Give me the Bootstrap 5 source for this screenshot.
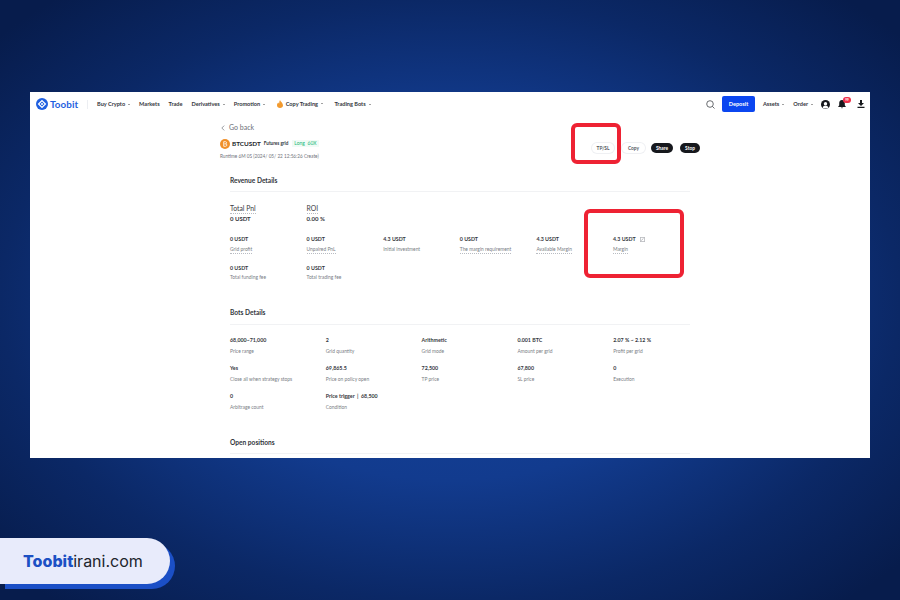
<!DOCTYPE html>
<html lang="en">
<head>
  <meta charset="UTF-8" />
  <meta name="viewport" content="width=device-width, initial-scale=1.0"/>
  <title>Toobit | Bot details</title>
  <link href="https://cdn.jsdelivr.net/npm/bootstrap@5.3.0/dist/css/bootstrap.min.css" rel="stylesheet">
  <style>
    html, body { height: 100%; }
    body {
      width: 900px;
      height: 600px;
      overflow: hidden;
      font-family: "Lato", "Liberation Sans", sans-serif;
      background: radial-gradient(ellipse 600px 400px at 450px 300px, #15459f 0%, #123b8e 45%, #0b2866 75%, #071c4c 100%);
      padding-top: 92px;
    }
    .shot {
      position: relative;
      width: 840px;
      height: 366px;
      margin-left: 30px;
      overflow: hidden;
      color: #23262b;
    }
    .topbar { height: 24px; padding: 0 5px 0 6px; font-size: 5.6px; font-weight: 700; color: #33363c; }
    .brand { color: #1f5fe0; font-size: 9.8px; font-weight: 700; width: 51px; gap: 2px; letter-spacing: .1px; }
    .brand-sep { width: 1px; height: 9px; background: #eceef2; margin: 0 9px 0 0; }
    .menu { gap: 9px; }
    .menu-item { white-space: nowrap; }
    .caret::after { content: ""; display: inline-block; margin-left: 3px; vertical-align: 1px; border: 1.5px solid transparent; border-top: 1.7px solid #444; border-bottom: 0; }
    .copy-item { margin: 0 2.500px; }
    .flame { margin-right: 3px; }
    .search-icon { margin-right: 7px; }
    .order-item { margin-left: 9px; }
    .deposit { background: #0b46f0; color: #fff; width: 33px; height: 16px; border-radius: 2px; font-size: 5.6px; font-weight: 700; padding: 0; border: 0; }
    .bell-count { position: absolute; top: -3px; left: 5px; width: 8px; height: 6px; border-radius: 3px; background: #f0304a; color: #fff; font-size: 3px; line-height: 6px; text-align: center; }
    .page { width: 480px; margin-left: 190px; }
    .back { height: 11px; margin-top: 6px; font-size: 7px; color: #6d7178; line-height: 11px; gap: 4px; padding-left: 1px; }
    .head { margin-top: 5px; height: 24px; }
    .pair { font-size: 6.400px; font-weight: 700; line-height: 11px; gap: 2px; }
    .grid-tag { font-size: 4.600px; font-weight: 700; color: #30343a; margin-left: 1px; }
    .long-tag { font-size: 5px; font-weight: 400; color: #18b979; background: #f0fbf6; padding: 0 2px; line-height: 7px; margin-left: 2px; }
    .runtime { font-size: 4.7px; color: #6f737a; margin-top: 3.500px; line-height: 7px; white-space: nowrap; }
    .pill { height: 10px; border-radius: 5px; font-size: 4.8px; line-height: 10px; padding: 0; text-align: center; font-weight: 700; }
    .pill-light { background: #fff; color: #55595f; box-shadow: 0 0 0 1px #eff0f3; }
    .pill-dark { background: #16181d; color: #fff; }
    .pills { gap: 7px; padding-top: 5px; }
    .w-tpsl { width: 22px; margin-right: 1px; }
    .w-copy { width: 23px; margin-right: -1px; }
    .w-share { width: 22px; }
    .w-stop { width: 20px; }
    .block { margin: 0 10px; }
    .block-title { font-size: 6.600px; font-weight: 700; line-height: 10px; color: #33363c; }
    .rule { height: 1px; background: #f1f2f4; margin: 6px 0 0; }
    .cell { flex: 0 0 auto; padding: 0; }
    .cell-value { font-size: 5.300px; font-weight: 700; line-height: 8px; color: #35383e; white-space: nowrap; }
    .cell-label { font-size: 4.9px; line-height: 7px; color: #797d84; margin-top: 2.500px; white-space: nowrap; }
    .dashed { display: inline-block; border-bottom: .6px dotted #b9bcc2; }
    .big-label { display: block; width: fit-content; font-size: 6.8px; line-height: 9px; color: #3a3d43; }
    .big-value { font-size: 6px; font-weight: 700; line-height: 9px; color: #35383e; }
    .rev-cols > .cell { width: 76.6px; }
    .bot-cols > .cell { width: 95.8px; }
    .rev-top { margin-top: 12px; }
    .rev-mid { margin-top: 12px; }
    .rev-low { margin-top: 10px; }
    .bots { margin-top: 26px; }
    .bots .rule { margin-top: 7px; }
    .bot-grid { margin-top: 11px; margin-right: -20px; row-gap: 9.500px; }
    .bot-grid .cell-label { margin-top: 3.500px; }
    .opens { margin-top: 26.500px; }
    .mark-box { position: absolute; border: 4px solid #ee2233; border-radius: 6px; }
    .mark-tpsl { left: 541px; top: 31px; width: 50px; height: 41px; }
    .mark-margin { left: 554px; top: 117px; width: 100px; height: 69px; }
    .site-tag {
      width: 170px;
      height: 46px;
      margin-top: 80px;
      background: #e8ebfb;
      border-radius: 0 23px 23px 0;
      box-shadow: 5px 5px 0 #1b4fc6;
      padding-left: 23px;
      font-family: "Inter", "Liberation Sans", sans-serif;
      font-size: 16px;
      line-height: 46px;
      color: #20242c;
    }
    .site-tag b { color: #1c50c4; font-weight: 800; }
  </style>
</head>
<body>
  <div class="shot bg-white">
    <nav class="topbar d-flex align-items-center">
      <div class="brand d-flex align-items-center">
        <svg width="12" height="12" viewBox="0 0 12 12"><circle cx="6" cy="6" r="6" fill="#1f5fe0"/><path d="M6 2.6 9.4 6 6 9.4 2.6 6Z" fill="none" stroke="#fff" stroke-width="1.3"/><circle cx="6" cy="6" r="1" fill="#fff"/></svg>
        <span>Toobit</span>
      </div>
      <span class="brand-sep"></span>
      <div class="menu d-flex align-items-center">
        <span class="menu-item caret">Buy Crypto</span>
        <span class="menu-item">Markets</span>
        <span class="menu-item">Trade</span>
        <span class="menu-item caret">Derivatives</span>
        <span class="menu-item caret">Promotion</span>
        <span class="menu-item caret copy-item d-flex align-items-center"><svg class="flame" width="6" height="8" viewBox="0 0 6 8"><path d="M3 0C3.3 1.6 6 3 6 5.2 6 6.900 4.700 8 3 8S0 6.900 0 5.200C0 4 .8 3.200 1.300 2.600 1.500 3.200 1.800 3.500 2.200 3.600 2.100 2.200 2.400 1 3 0Z" fill="#f29a2e"/></svg>Copy Trading</span>
        <span class="menu-item caret">Trading Bots</span>
      </div>
      <div class="ms-auto d-flex align-items-center">
        <svg class="search-icon" width="9" height="9" viewBox="0 0 9 9"><circle cx="4" cy="4" r="3.300" fill="none" stroke="#44474d" stroke-width=".8"/><path d="M6.400 6.400 8.500 8.500" stroke="#44474d" stroke-width=".8"/></svg>
        <button class="btn deposit">Deposit</button>
        <span class="menu-item caret ms-2">Assets</span>
        <span class="menu-item caret order-item">Order</span>
        <svg class="ms-2" width="9" height="9" viewBox="0 0 9 9"><circle cx="4.500" cy="4.500" r="4.500" fill="#17191d"/><circle cx="4.500" cy="3.700" r="1.700" fill="#fff"/><path d="M1.700 7.500C2.300 6 3.300 5.800 4.500 5.800S6.700 6 7.300 7.500 5.800 8.500 4.500 8.500 1.700 8.500 1.700 7.500Z" fill="#fff"/></svg>
        <span class="position-relative ms-2 d-flex">
          <svg width="8" height="9" viewBox="0 0 8 9"><path d="M4 0C2 0 1.200 1.500 1.200 3.200V5.200L0 7H8L6.800 5.200V3.200C6.800 1.500 6 0 4 0ZM3 7.600H5C5 8.500 3 8.500 3 7.600Z" fill="#17191d"/></svg>
          <span class="bell-count">99</span>
        </span>
        <svg class="dl-icon" style="margin-left:11px" width="8" height="8" viewBox="0 0 8 8"><path d="M3 0H5V3H7L4 6 1 3H3ZM.5 6.800H7.500V8H.5Z" fill="#17191d"/></svg>
      </div>
    </nav>

    <div class="page">
      <div class="back d-flex align-items-center">
        <svg width="4" height="6" viewBox="0 0 4 6"><path d="M3.200.6.800 3 3.200 5.400" fill="none" stroke="#6d7178" stroke-width=".7"/></svg>
        <span>Go back</span>
      </div>
      <div class="head d-flex justify-content-between">
        <div>
          <div class="pair d-flex align-items-center">
            <svg width="10" height="10" viewBox="0 0 10 10"><circle cx="5" cy="5" r="5" fill="#f0902a"/><path d="M3.700 2.700H5.600C6.900 2.700 6.900 4.800 5.600 4.800 7.300 4.800 7.300 7.300 5.600 7.300H3.700ZM4.200 4.900H5.600" fill="none" stroke="#fff" stroke-width=".8"/></svg>
            <span>BTCUSDT</span>
            <span class="grid-tag">Futures grid</span>
            <span class="long-tag">Long&nbsp; 60X</span>
          </div>
          <div class="runtime">Runtime 6M 0S (2024/ 05/ 22 12:56:26 Create)</div>
        </div>
        <div class="pills d-flex align-items-start">
          <span class="pill pill-light w-tpsl">TP/SL</span>
          <span class="pill pill-light w-copy">Copy</span>
          <span class="pill pill-dark w-share">Share</span>
          <span class="pill pill-dark w-stop">Stop</span>
        </div>
      </div>

      <section class="block" style="margin-top:13px">
        <div class="block-title">Revenue Details</div>
        <div class="rule"></div>
        <div class="row gx-0 rev-cols rev-top">
          <div class="cell"><span class="big-label dashed">Total Pnl</span><div class="big-value">0 USDT</div></div>
          <div class="cell"><span class="big-label dashed">ROI</span><div class="big-value">0.00 %</div></div>
        </div>
        <div class="row gx-0 rev-cols rev-mid">
          <div class="cell"><div class="cell-value">0 USDT</div><div class="cell-label"><span class="dashed">Grid profit</span></div></div>
          <div class="cell"><div class="cell-value">0 USDT</div><div class="cell-label"><span class="dashed">Unpaired PnL</span></div></div>
          <div class="cell"><div class="cell-value">4.3 USDT</div><div class="cell-label">Initial investment</div></div>
          <div class="cell"><div class="cell-value">0 USDT</div><div class="cell-label"><span class="dashed">The margin requirement</span></div></div>
          <div class="cell"><div class="cell-value">4.3 USDT</div><div class="cell-label"><span class="dashed">Available Margin</span></div></div>
          <div class="cell">
            <div class="cell-value d-flex align-items-center gap-1">4.3 USDT
              <svg width="5" height="5" viewBox="0 0 5 5"><path d="M.3.3H4.700V4.700H.3ZM1.200 3.600 3.500 1.300" fill="none" stroke="#73777e" stroke-width=".5"/></svg>
            </div>
            <div class="cell-label"><span class="dashed">Margin</span></div>
          </div>
        </div>
        <div class="row gx-0 rev-cols rev-low">
          <div class="cell"><div class="cell-value">0 USDT</div><div class="cell-label">Total funding fee</div></div>
          <div class="cell"><div class="cell-value">0 USDT</div><div class="cell-label">Total trading fee</div></div>
        </div>
      </section>

      <section class="block bots">
        <div class="block-title">Bots Details</div>
        <div class="rule"></div>
        <div class="row gx-0 bot-cols bot-grid">
          <div class="cell"><div class="cell-value">68,000~71,000</div><div class="cell-label">Price range</div></div>
          <div class="cell"><div class="cell-value">2</div><div class="cell-label">Grid quantity</div></div>
          <div class="cell"><div class="cell-value">Arithmetic</div><div class="cell-label">Grid mode</div></div>
          <div class="cell"><div class="cell-value">0.001 BTC</div><div class="cell-label">Amount per grid</div></div>
          <div class="cell"><div class="cell-value">2.07 % ~ 2.12 %</div><div class="cell-label">Profit per grid</div></div>
          <div class="cell"><div class="cell-value">Yes</div><div class="cell-label">Close all when strategy stops</div></div>
          <div class="cell"><div class="cell-value">69,865.5</div><div class="cell-label">Price on policy open</div></div>
          <div class="cell"><div class="cell-value">72,500</div><div class="cell-label">TP price</div></div>
          <div class="cell"><div class="cell-value">67,800</div><div class="cell-label">SL price</div></div>
          <div class="cell"><div class="cell-value">0</div><div class="cell-label">Execution</div></div>
          <div class="cell"><div class="cell-value">0</div><div class="cell-label">Arbitrage count</div></div>
          <div class="cell"><div class="cell-value">Price trigger &nbsp;|&nbsp; 68,500</div><div class="cell-label">Condition</div></div>
        </div>
      </section>

      <section class="block opens">
        <div class="block-title">Open positions</div>
        <div class="rule"></div>
      </section>
    </div>

    <div class="mark-box mark-tpsl"></div>
    <div class="mark-box mark-margin"></div>
  </div>

  <div class="site-tag"><b>Toobit</b>irani.com</div>

  <script src="https://cdn.jsdelivr.net/npm/bootstrap@5.3.0/dist/js/bootstrap.bundle.min.js"></script>
</body>
</html>
